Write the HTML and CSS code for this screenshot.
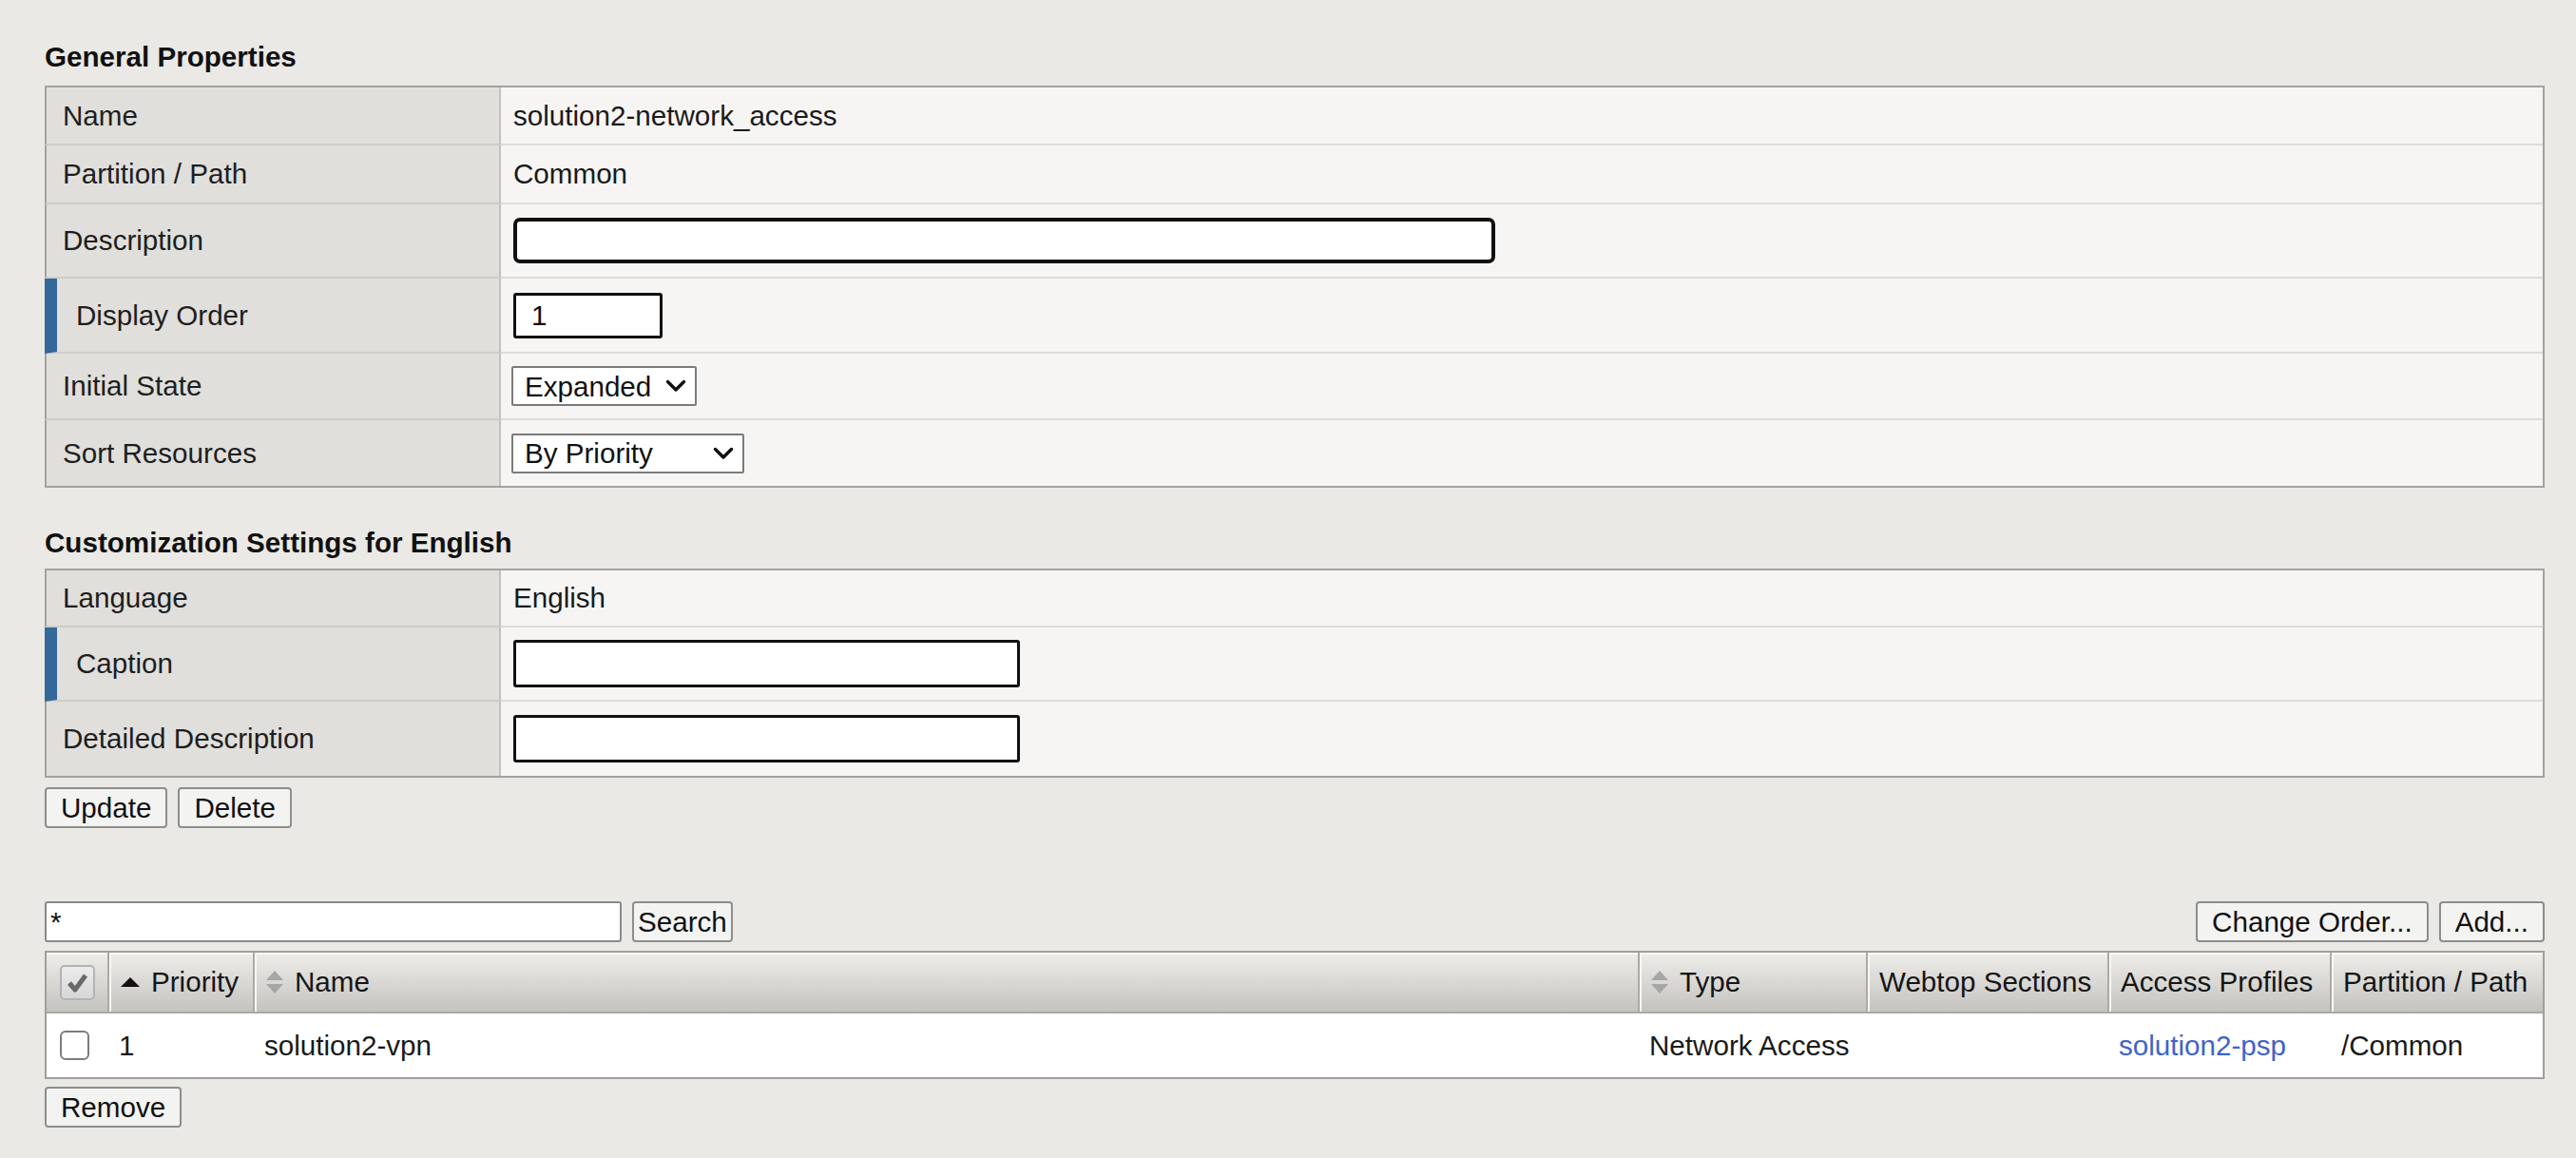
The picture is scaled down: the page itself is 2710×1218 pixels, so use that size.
FILE: index.html
```html
<!DOCTYPE html>
<html lang="en">
<head>
<meta charset="utf-8">
<title>Network Access Resource – solution2-network_access</title>
<link rel="stylesheet" href="styles.css">
</head>
<body>
<main class="page">
  <h2 class="section-title first">General Properties</h2>
  <div class="props props-general">
    <div class="label">Name</div>
    <div class="value">solution2-network_access</div>

    <div class="label">Partition / Path</div>
    <div class="value">Common</div>

    <div class="label">Description</div>
    <div class="value"><input class="text wide focused" type="text"></div>

    <div class="label required">Display Order</div>
    <div class="value"><input class="text short" type="text" value="1"></div>

    <div class="label">Initial State</div>
    <div class="value">
      <span class="select sel-state">
        <select><option>Expanded</option><option>Collapsed</option></select>
        <svg class="chev" width="22" height="14" viewBox="0 0 22 14"><path d="M2.5 2.5 L11 11 L19.5 2.5" fill="none" stroke="#111" stroke-width="3.4" stroke-linecap="round" stroke-linejoin="round"/></svg>
      </span>
    </div>

    <div class="label">Sort Resources</div>
    <div class="value">
      <span class="select sel-sort">
        <select><option>By Priority</option><option>By Name</option></select>
        <svg class="chev" width="22" height="14" viewBox="0 0 22 14"><path d="M2.5 2.5 L11 11 L19.5 2.5" fill="none" stroke="#111" stroke-width="3.4" stroke-linecap="round" stroke-linejoin="round"/></svg>
      </span>
    </div>
  </div>

  <h2 class="section-title second">Customization Settings for English</h2>
  <div class="props props-custom">
    <div class="label">Language</div>
    <div class="value">English</div>

    <div class="label required">Caption</div>
    <div class="value"><input class="text medium" type="text"></div>

    <div class="label">Detailed Description</div>
    <div class="value"><input class="text medium" type="text"></div>
  </div>

  <div class="actions">
    <button class="btn" type="button">Update</button>
    <button class="btn" type="button">Delete</button>
  </div>

  <div class="toolbar">
    <div class="tool-group">
      <input class="search" type="text" value="*">
      <button class="btn tight" type="button">Search</button>
    </div>
    <div class="tool-group">
      <button class="btn" type="button">Change Order...</button>
      <button class="btn" type="button">Add...</button>
    </div>
  </div>

  <table class="resources">
    <colgroup>
      <col class="c-check">
      <col class="c-prio">
      <col>
      <col class="c-type">
      <col class="c-webtop">
      <col class="c-access">
      <col class="c-part">
    </colgroup>
    <thead>
      <tr>
        <th><div class="hcell"><span class="checkall"><svg width="33" height="33" viewBox="0 0 33 33"><path d="M8 17 L14 24 L25 9" fill="none" stroke="#686868" stroke-width="5" stroke-linejoin="round"/></svg></span></div></th>
        <th><div class="hcell"><svg width="20" height="10" viewBox="0 0 20 10"><path d="M10 0 L20 10 H0 Z" fill="#111"/></svg><span>Priority</span></div></th>
        <th><div class="hcell"><svg width="18" height="24" viewBox="0 0 18 24"><path d="M9 0 L18 10 H0 Z M0 14 H18 L9 24 Z" fill="#a6a6a6"/></svg><span>Name</span></div></th>
        <th><div class="hcell"><svg width="18" height="24" viewBox="0 0 18 24"><path d="M9 0 L18 10 H0 Z M0 14 H18 L9 24 Z" fill="#a6a6a6"/></svg><span>Type</span></div></th>
        <th><div class="hcell">Webtop Sections</div></th>
        <th><div class="hcell">Access Profiles</div></th>
        <th><div class="hcell">Partition / Path</div></th>
      </tr>
    </thead>
    <tbody>
      <tr>
        <td><div class="dcell"><input class="check" type="checkbox"></div></td>
        <td><div class="dcell">1</div></td>
        <td><div class="dcell">solution2-vpn</div></td>
        <td><div class="dcell">Network Access</div></td>
        <td><div class="dcell"></div></td>
        <td><div class="dcell"><a href="#" class="link">solution2-psp</a></div></td>
        <td><div class="dcell">/Common</div></td>
      </tr>
    </tbody>
  </table>

  <div class="remove-row">
    <button class="btn" type="button">Remove</button>
  </div>
</main>
</body>
</html>
```

FILE: styles.css
```css
html, body {
  margin: 0;
  padding: 0;
}

body {
  background: #eae9e5;
  color: #1a1a1a;
  font-family: "Liberation Sans", Arial, sans-serif;
  font-size: 29.6px;
  width: 2710px;
  min-height: 1218px;
}

.page {
  padding: 43px 33px 0 47px;
}

.section-title {
  margin: 0;
  font-size: 29.6px;
  font-weight: bold;
  line-height: 34px;
  color: #111;
}

.section-title.first {
  margin-bottom: 13px;
}

.section-title.second {
  margin-top: 41px;
  margin-bottom: 10px;
}

/* property tables */
.props {
  display: grid;
  grid-template-columns: 480px 1fr;
  border-top: 2px solid #a3a29e;
  border-right: 2px solid #a3a29e;
  border-bottom: 2px solid #a3a29e;
}

.props-general {
  grid-template-rows: 61px 62px 78px 79px 70px 69px;
}

.props-custom {
  grid-template-rows: 60px 78px 78px;
}

.label,
.value {
  box-sizing: border-box;
  display: flex;
  align-items: center;
  white-space: nowrap;
}

.label {
  background: #e0dfdb;
  color: #1e1e1e;
  border-left: 2px solid #a3a29e;
  border-right: 2px solid #c2c1bd;
  border-bottom: 2px solid #cdccc8;
  padding-left: 17px;
}

.label.required {
  border-left: 13px solid #34679a;
  padding-left: 20px;
}

.value {
  background: #f6f5f3;
  border-bottom: 2px solid #dddcd8;
  padding-left: 13px;
}

.props > .label:nth-last-child(2),
.props > .value:last-child {
  border-bottom: 0;
}

/* inputs */
.text {
  box-sizing: border-box;
  height: 48px;
  border: 3px solid #111;
  border-radius: 3px;
  background: #fff;
  font: inherit;
  color: #111;
  padding: 0 14px;
  margin: 0;
  outline: none;
}

.text.wide {
  width: 1033px;
}

.text.focused {
  border-radius: 7px;
  border-width: 4px;
}

.text.short {
  width: 157px;
  padding-left: 16px;
}

.text.medium {
  width: 533px;
  height: 50px;
}

/* selects */
.select {
  position: relative;
  display: inline-block;
  margin-left: -2px;
}

.sel-state {
  width: 195px;
}

.sel-sort {
  width: 245px;
}

.select select {
  -webkit-appearance: none;
  appearance: none;
  box-sizing: border-box;
  width: 100%;
  height: 42px;
  border: 2px solid #7b7b7b;
  border-radius: 2px;
  background: #fff;
  font: inherit;
  color: #111;
  padding: 0 40px 0 12px;
  margin: 0;
}

.select .chev {
  position: absolute;
  right: 11px;
  top: 14px;
  pointer-events: none;
}

/* buttons */
.btn {
  box-sizing: border-box;
  height: 43px;
  padding: 0 15px;
  border: 2px solid #8d8d8d;
  border-radius: 4px;
  background: #f3f3f2;
  font: inherit;
  color: #111;
  margin: 0;
  cursor: pointer;
}

.btn.tight {
  padding: 0 4px;
}

.actions {
  display: flex;
  gap: 11px;
  margin-top: 10px;
}

.toolbar {
  display: flex;
  justify-content: space-between;
  align-items: center;
  margin-top: 77px;
}

.tool-group {
  display: flex;
  gap: 11px;
}

.search {
  box-sizing: border-box;
  width: 607px;
  height: 43px;
  border: 2px solid #8a8a8a;
  border-radius: 3px;
  background: #fff;
  font: inherit;
  color: #111;
  padding: 0 4px;
  margin: 0;
}

/* resource list */
.resources {
  margin-top: 9px;
  width: 2630px;
  table-layout: fixed;
  border-collapse: separate;
  border-spacing: 0;
  border: 2px solid #a09f9b;
}

.c-check { width: 64px; }
.c-prio { width: 153px; }
.c-type { width: 240px; }
.c-webtop { width: 254px; }
.c-access { width: 234px; }
.c-part { width: 224px; }

.resources th,
.resources td {
  padding: 0;
  text-align: left;
  font-weight: normal;
  vertical-align: middle;
  white-space: nowrap;
}

.resources th {
  background: linear-gradient(#eeede9, #d9d8d4 50%, #c4c3bf);
  border-bottom: 2px solid #aaa9a5;
  box-shadow: inset 0 2px 0 #f7f7f5;
  color: #151515;
}

.resources th + th {
  border-left: 2px solid #abaaa6;
  box-shadow: inset 2px 2px 0 #f7f7f5;
}

.hcell {
  height: 62px;
  display: flex;
  align-items: center;
  gap: 12px;
  padding-left: 12px;
}

.resources th:first-child .hcell {
  padding-left: 14px;
}

.checkall {
  box-sizing: border-box;
  width: 37px;
  height: 37px;
  border: 2px solid #b3b3b3;
  border-radius: 5px;
  background: linear-gradient(#ececec, #d6d6d6);
  display: flex;
  align-items: center;
  justify-content: center;
}

.resources td {
  background: #fff;
}

.dcell {
  height: 67px;
  display: flex;
  align-items: center;
  padding-left: 12px;
}

.resources td:first-child .dcell {
  padding-left: 14px;
}

.check {
  -webkit-appearance: none;
  appearance: none;
  box-sizing: border-box;
  width: 31px;
  height: 31px;
  margin: 0;
  border: 2px solid #7c7c7c;
  border-radius: 6px;
  background: #fff;
}

.link {
  color: #3f63c9;
  text-decoration: none;
}

.remove-row {
  margin-top: 8px;
}
```
